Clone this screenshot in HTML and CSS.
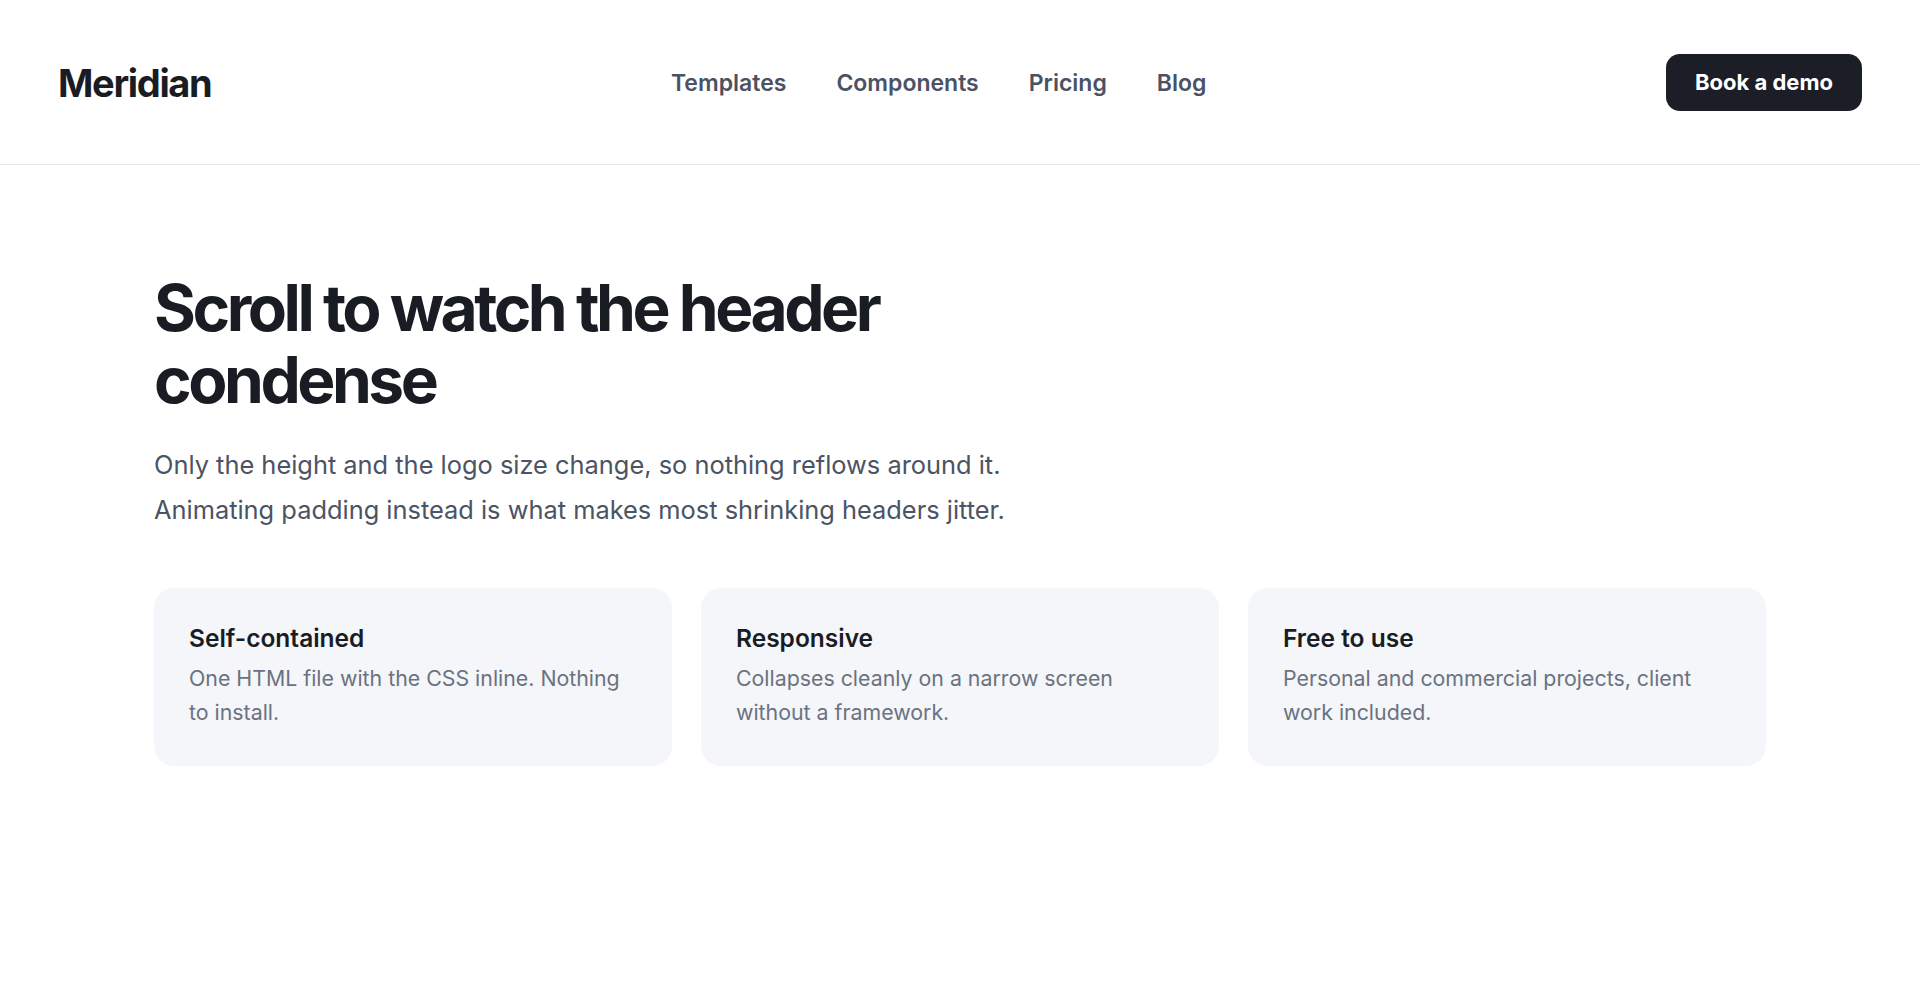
FILE: index.html
```html
<!DOCTYPE html>
<html lang="en">
<head>
<meta charset="utf-8">
<title>Meridian</title>
<link rel="stylesheet" href="styles.css">
</head>
<body>
<header class="site-header">
  <a class="logo" href="#">Meridian</a>
  <nav class="nav">
    <a href="#">Templates</a>
    <a href="#">Components</a>
    <a href="#">Pricing</a>
    <a href="#">Blog</a>
  </nav>
  <a class="btn" href="#">Book a demo</a>
</header>
<main class="main">
  <section class="hero">
    <h1>Scroll to watch the header condense</h1>
    <p>Only the height and the logo size change, so nothing reflows around it. Animating padding instead is what makes most shrinking headers jitter.</p>
  </section>
  <section class="cards">
    <div class="card">
      <h3>Self-contained</h3>
      <p>One HTML file with the CSS inline. Nothing to install.</p>
    </div>
    <div class="card">
      <h3>Responsive</h3>
      <p>Collapses cleanly on a narrow screen without a framework.</p>
    </div>
    <div class="card">
      <h3>Free to use</h3>
      <p>Personal and commercial projects, client work included.</p>
    </div>
  </section>
</main>
</body>
</html>
```

FILE: styles.css
```css
* { box-sizing: border-box; }
html, body { margin: 0; padding: 0; background: #ffffff; }
body {
  font-family: Inter, "Noto Sans", "Liberation Sans", sans-serif;
  color: #1a1c24;
}
a { text-decoration: none; color: inherit; }

.site-header {
  height: 165px;
  padding: 0 58px;
  display: flex;
  align-items: center;
  justify-content: space-between;
  border-bottom: 1px solid #e7e9ed;
}
.logo {
  font-size: 38px;
  font-weight: 700;
  letter-spacing: -0.035em;
  color: #1a1c24;
  padding-top: 2px;
}
.nav {
  display: flex;
  gap: 50px;
  padding-top: 2px;
}
.nav a {
  font-size: 23px;
  font-weight: 600;
  color: #4b5263;
}
.btn {
  display: flex;
  align-items: center;
  height: 57px;
  padding: 0 29px;
  border-radius: 14px;
  background: #1c1e27;
  color: #ffffff;
  font-size: 22px;
  font-weight: 700;
}

.main {
  max-width: 1612px;
  margin: 0 auto;
  padding-top: 107px;
}
.hero h1 {
  margin: 0;
  max-width: 880px;
  font-size: 64px;
  line-height: 72px;
  font-weight: 700;
  letter-spacing: -0.054em;
  color: #1a1c24;
}
.hero p {
  margin: 26px 0 0;
  max-width: 900px;
  font-size: 25.4px;
  line-height: 45px;
  color: #4b5364;
}
.cards {
  margin-top: 56px;
  display: grid;
  grid-template-columns: repeat(3, 1fr);
  gap: 29px;
}
.card {
  background: #f4f6f9;
  border-radius: 20px;
  padding: 35px 35px 37px;
}
.card h3 {
  margin: 0 0 8px;
  font-size: 24.5px;
  line-height: 30px;
  font-weight: 600;
  color: #1a1c24;
}
.card p {
  margin: 0;
  font-size: 21.33px;
  line-height: 34px;
  color: #6b7280;
}
```
